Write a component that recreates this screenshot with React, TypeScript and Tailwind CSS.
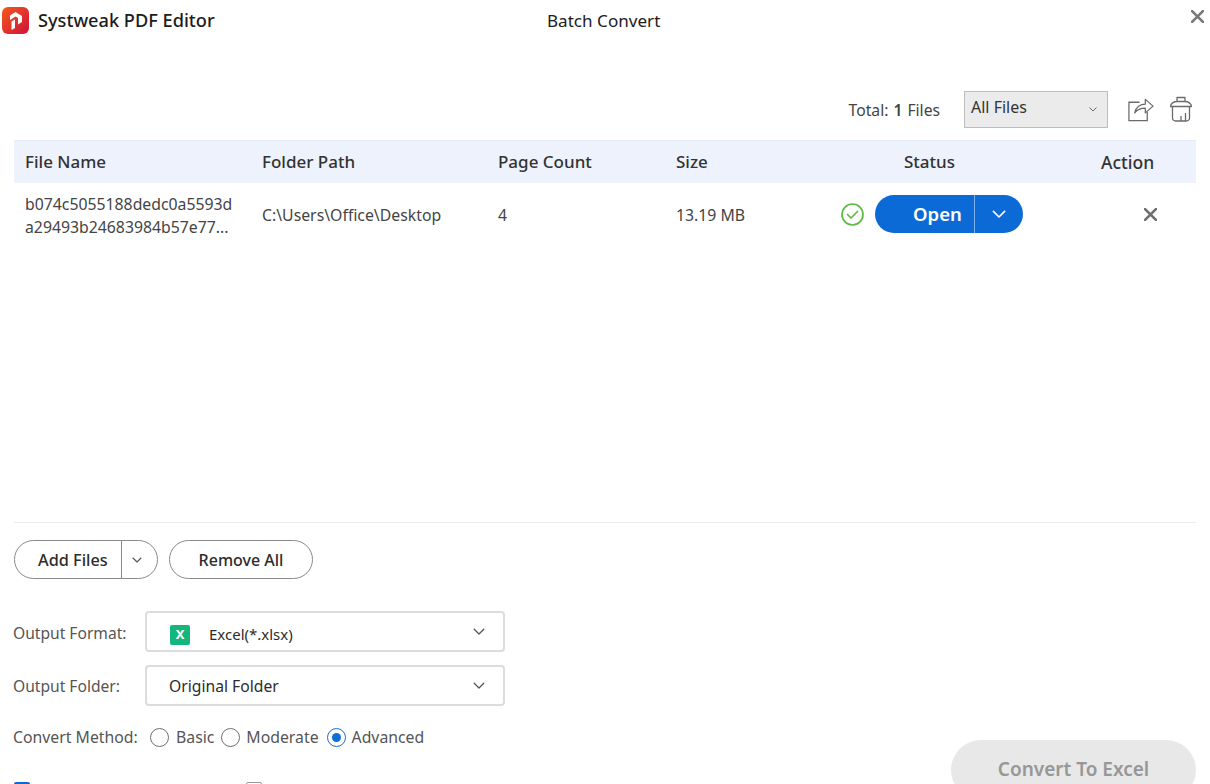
import React from "react";

const Chev = ({ className = "", color = "#555", w = 12 }: { className?: string; color?: string; w?: number }) => (
  <svg width={w} height={w * 0.6} viewBox="0 0 10 6" fill="none" className={className}>
    <path d="M1 1l4 4 4-4" stroke={color} strokeWidth="1.1" strokeLinecap="round" strokeLinejoin="round" />
  </svg>
);

const Close = ({ size = 12, color = "#6e6e6e" }: { size?: number; color?: string }) => (
  <svg width={size} height={size} viewBox="0 0 12 12" fill="none">
    <path d="M1 1l10 10M11 1L1 11" stroke={color} strokeWidth="2.400" strokeLinecap="round" />
  </svg>
);

const Radio = ({ on = false }: { on?: boolean }) => (
  <span className={`flex h-[19px] w-[19px] items-center justify-center rounded-full border-[1.5px] bg-white ${on ? "border-[#0f6fd6]" : "border-[#6f6f6f]"}`}>
    {on && <span className="h-[9px] w-[9px] rounded-full bg-[#0f6fd6]" />}
  </span>
);

const Select = ({ children, icon }: { children: React.ReactNode; icon?: boolean }) => (
  <div className={`flex h-[41px] w-[360px] items-center rounded-[4px] border-2 border-[#dcdcdc] bg-white pr-[18px] ${icon ? "pl-[23px]" : "pl-[22px]"}`}>
    {icon && (
      <span className="mr-[19px] mt-[6px] flex h-[20px] w-[20px] items-center justify-center rounded-[2px] bg-[#15b57e] text-[13px] font-bold text-white">X</span>
    )}
    <span className={`flex-1 text-[#2c2c2c] ${icon ? "mt-[6px] text-[15px]" : "mt-[2px] text-[15.7px]"}`}>{children}</span>
    <Chev />
  </div>
);

export default function App() {
  return (
    <div className="flex h-[784px] w-[1210px] flex-col overflow-hidden bg-white font-['Noto_Sans','Open_Sans',sans-serif] text-[#333]">
      <header className="relative flex h-[40px] shrink-0 items-center pl-[2px] pt-[1px]">
        <svg width="27" height="27" viewBox="0 0 27 27" className="mr-[9px]">
          <defs>
            <linearGradient id="logo" x1="0" y1="0" x2="1" y2="1">
              <stop offset="0" stopColor="#f4591f" />
              <stop offset="1" stopColor="#cf1237" />
            </linearGradient>
          </defs>
          <rect width="27" height="27" rx="6" fill="url(#logo)" />
          <path d="M8 8.500 13.500 5 20 9v6l-4 2.500V11l-2.500-1.500L8 13z" fill="#fff" />
          <path d="M9.500 14.500 13 12.500V21l-3.500 2z" fill="#fff" />
        </svg>
        <span className="text-[18.2px] font-medium text-[#1c1c1c]">Systweak PDF Editor</span>
        <span className="absolute left-[547px] top-[8px] text-[17.100px] text-[#1c1c1c]">Batch Convert</span>
        <span className="absolute right-[6px] top-[10px]"><Close size={13} color="#777" /></span>
      </header>

      <div className="flex h-[100px] shrink-0 items-start justify-end pr-[17px] pt-[51px]">
        <span className="mr-[24px] mt-[8px] text-[15.7px] text-[#444]">Total:<b className="mx-[5px] font-semibold">1</b>Files</span>
        <div className="mr-[19px] flex h-[37px] w-[144px] items-center justify-between border border-[#bdbdbd] bg-[#ebebeb] pl-[6px] pr-[10px]">
          <span className="-mt-[5px] text-[16px] text-[#333]">All Files</span>
          <Chev w={8} />
        </div>
        <svg width="27" height="26" viewBox="0 0 28 26" fill="none" stroke="#6a6a6a" strokeWidth="1.300" className="mr-[15px] mt-[5px]">
          <path d="M13 6H2v19h19v-9" />
          <path d="M8 17c1-6 6-9 11-9V3l8 7-8 7v-5c-5 0-8 1-11 5z" strokeLinejoin="round" />
        </svg>
        <svg width="24" height="26" viewBox="0 0 24 26" fill="none" stroke="#6a6a6a" strokeWidth="1.300" className="mt-[5px]">
          <path d="M8 5.500V1.500h8v4M1.500 10.500C1.500 7.500 5 5.500 8 5.500h8c3 0 6.500 2 6.500 5z" strokeLinejoin="round" />
          <path d="M3.500 10.500V22a3 3 0 0 0 3 3h11a3 3 0 0 0 3-3V10.500M12 25v-5M16.500 25v-8" />
        </svg>
      </div>

      <div className="mx-[14px] flex h-[43px] shrink-0 items-center border-t border-[#e6ebf5] bg-[#edf2fc] text-[17px] font-medium text-[#333]">
        <span className="w-[236px] pl-[11px]">File Name</span>
        <span className="w-[236px] pl-[12px]">Folder Path</span>
        <span className="w-[178px] pl-[12px]">Page Count</span>
        <span className="w-[192px] pl-[12px]">Size</span>
        <span className="w-[190px] pl-[48px]">Status</span>
        <span className="pl-[55px] text-[17.500px]">Action</span>
      </div>

      <div className="mx-[14px] flex h-[66px] shrink-0 items-center text-[15.8px] text-[#444]">
        <span className="w-[236px] pl-[11px] leading-[23px]">b074c5055188dedc0a5593d<br />a29493b24683984b57e77...</span>
        <span className="w-[236px] pl-[12px]">C:\Users\Office\Desktop</span>
        <span className="w-[178px] pl-[12px]">4</span>
        <span className="w-[177px] pl-[12px]">13.19 MB</span>
        <svg width="23" height="23" viewBox="0 0 23 23" fill="none" stroke="#5dbb46" strokeWidth="1.700" className="mb-[4px] mr-[11px]">
          <circle cx="11.500" cy="11.500" r="10.500" />
          <path d="M6.500 11.500l3.500 3.500 6.500-6.500" strokeLinecap="round" strokeLinejoin="round" />
        </svg>
        <div className="mb-[4px] flex h-[38px] w-[148px] items-center rounded-full bg-[#0c6ad6] text-white">
          <span className="w-[99px] pl-[38px] text-[18.500px] font-semibold">Open</span>
          <span className="h-full w-px bg-[#7db0ea]" />
          <span className="flex flex-1 justify-center"><Chev w={14} color="#fff" /></span>
        </div>
        <span className="mb-[4px] ml-[121px]"><Close size={13} /></span>
      </div>

      <div className="mx-[14px] mt-[273px] h-px shrink-0 bg-[#ebebeb]" />

      <div className="ml-[14px] mt-[17px] flex shrink-0 gap-[11px] text-[16px] font-medium text-[#2c2c2c]">
        <div className="flex h-[39px] w-[144px] items-center rounded-full border border-[#8a8a8a]">
          <span className="w-[106px] pl-[23px] pt-[1px] text-[16.300px]">Add Files</span>
          <span className="h-full w-px bg-[#8a8a8a]" />
          <span className="flex flex-1 justify-center pr-[6px]"><Chev w={10} /></span>
        </div>
        <div className="flex h-[39px] w-[144px] items-center justify-center rounded-full border border-[#8a8a8a]">Remove All</div>
      </div>

      <div className="ml-[13px] mt-[32px] flex shrink-0 items-center text-[15.6px] text-[#555]">
        <span className="mt-[4px] w-[132px]">Output Format:</span>
        <Select icon>Excel(*.xlsx)</Select>
      </div>
      <div className="ml-[13px] mt-[13px] flex shrink-0 items-center text-[15.6px] text-[#555]">
        <span className="mt-[2px] w-[132px]">Output Folder:</span>
        <Select>Original Folder</Select>
      </div>

      <div className="relative ml-[13px] mt-[20px] flex shrink-0 items-center text-[15.8px] text-[#555]">
        <span className="w-[137px]">Convert Method:</span>
        <Radio /><span className="ml-[7px] mr-[7px]">Basic</span>
        <Radio /><span className="ml-[6px] mr-[8px]">Moderate</span>
        <Radio on /><span className="ml-[6px]">Advanced</span>
      </div>

      <div className="relative mt-[32px] ml-[14px] flex shrink-0 items-start text-[16px] text-[#555]">
        <span className="h-[16px] w-[16px] rounded-[2px] bg-[#0c6ad6]" />
        <span className="ml-[9px] w-[207px]"></span>
        <span className="h-[16px] w-[16px] rounded-[2px] border border-[#999]" />
      </div>

      <div className="absolute left-[951px] top-[740px] flex h-[60px] w-[245px] items-start justify-center rounded-full bg-[#e8e8e8] pt-[15px] text-[19px] font-semibold text-[#979797]">
        Convert To Excel
      </div>
    </div>
  );
}
